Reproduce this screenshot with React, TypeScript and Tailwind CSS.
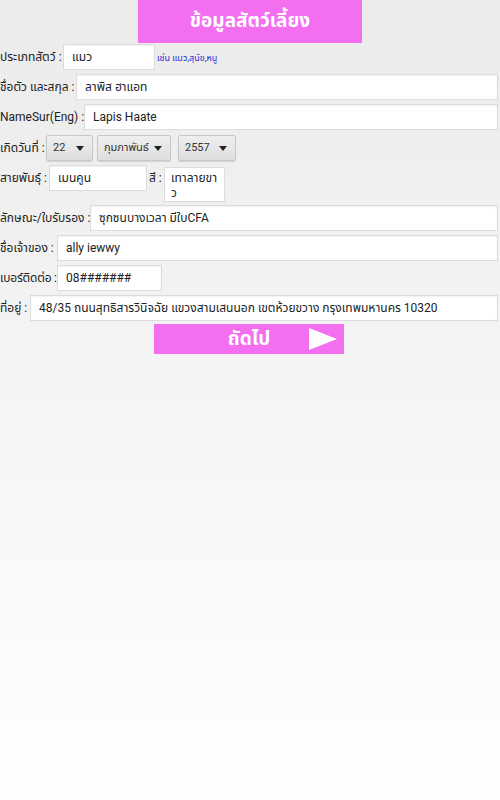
import type { ReactNode } from 'react';

const FONT = "font-['Roboto','Noto_Sans_Thai','Noto_Sans',sans-serif]";

function Field({ value, className = '' }: { value: string; className?: string }) {
  return (
    <div
      className={`h-[26px] flex items-center px-2 bg-white border border-[#dcdcdc] shadow-[inset_0_1px_2px_rgba(0,0,0,0.06)] text-[12px] text-[#222] whitespace-nowrap overflow-hidden ${className}`}
    >
      {value}
    </div>
  );
}

function Label({ children, className = '' }: { children: ReactNode; className?: string }) {
  return (
    <span className={`h-[26px] shrink-0 flex items-center text-[12px] text-[#222] whitespace-nowrap ${className}`}>
      {children}
    </span>
  );
}

function Spinner({ value, className = '' }: { value: string; className?: string }) {
  return (
    <div
      className={`h-[26px] flex items-center justify-between pl-[6px] pr-[8px] rounded-[2px] border border-[#c8c8c8] bg-gradient-to-b from-[#efefef] to-[#dedede] shadow-[0_1px_1px_rgba(0,0,0,0.12)] text-[11px] text-[#333] ${className}`}
    >
      <span>{value}</span>
      <span className="w-0 h-0 border-l-[4px] border-r-[4px] border-t-[5px] border-l-transparent border-r-transparent border-t-[#222]" />
    </div>
  );
}

export default function App() {
  return (
    <div className={`${FONT} w-[500px] h-[800px] bg-gradient-to-b from-[#ebebeb] via-[#f5f5f5] to-white`}>
      <div className="flex justify-center">
        <div className="w-[224px] h-[43px] bg-[#f46ef0] flex items-center justify-center text-white font-bold text-[19px]">
          ข้อมูลสัตว์เลี้ยง
        </div>
      </div>

      <div className="flex flex-col gap-1 pt-px pr-[2px]">
        <div className="flex items-center">
          <Label className="w-[63px]">ประเภทสัตว์ :</Label>
          <Field value="แมว" className="w-[92px]" />
          <span className="ml-[2px] text-[9px] text-[#2b2bd8] pt-[3px]">เช่น แมว,สุนัข,หนู</span>
        </div>

        <div className="flex items-center">
          <Label className="w-[76px]">ชื่อตัว และสกุล :</Label>
          <Field value="ลาพิส ฮาแอท" className="flex-1" />
        </div>

        <div className="flex items-center">
          <Label className="w-[84px]">NameSur(Eng) :</Label>
          <Field value="Lapis Haate" className="flex-1" />
        </div>

        <div className="flex items-center mt-px">
          <Label className="w-[46px]">เกิดวันที่ :</Label>
          <div className="flex">
            <Spinner value="22" className="w-[47px]" />
            <Spinner value="กุมภาพันธ์" className="w-[74px] ml-[4px]" />
            <Spinner value="2557" className="w-[58px] ml-[7px]" />
          </div>
        </div>

        <div className="flex items-start mb-[-1px]">
          <Label className="w-[49px]">สายพันธุ์ :</Label>
          <Field value="เมนคูน" className="w-[98px]" />
          <Label className="w-[17px] pl-[2px]">สี :</Label>
          <div className="mt-[2px] w-[61px] h-[35px] pl-[6px] pr-[2px] pt-[3px] bg-white border border-[#dcdcdc] text-[12px] leading-[15px] text-[#222] break-all">
            เทาลายขาว
          </div>
        </div>

        <div className="flex items-center">
          <Label className="w-[90px]">ลักษณะ/ใบรับรอง :</Label>
          <Field value="ซุกซนบางเวลา มีใบCFA" className="flex-1" />
        </div>

        <div className="flex items-center">
          <Label className="w-[57px]">ชื่อเจ้าของ :</Label>
          <Field value="ally iewwy" className="flex-1" />
        </div>

        <div className="flex items-center">
          <Label className="w-[57px] tracking-[-0.2px]">เบอร์ติดต่อ :</Label>
          <Field value="08#######" className="w-[105px]" />
        </div>

        <div className="flex items-center">
          <Label className="w-[30px]">ที่อยู่ :</Label>
          <Field value="48/35 ถนนสุทธิสารวินิจฉัย แขวงสามเสนนอก เขตห้วยขวาง กรุงเทพมหานคร 10320" className="flex-1" />
        </div>

        <div className="flex justify-center mt-[-1px]">
          <button className="relative w-[190px] h-[30px] bg-[#f46ef0] flex items-center justify-center text-white font-bold text-[19px]">
            <span>ถัดไป</span>
            <svg className="absolute right-[7px] top-[4px]" width="28" height="22" viewBox="0 0 28 22">
              <polygon points="0,0 28,11 0,22" fill="#ffffff" />
            </svg>
          </button>
        </div>
      </div>
    </div>
  );
}
